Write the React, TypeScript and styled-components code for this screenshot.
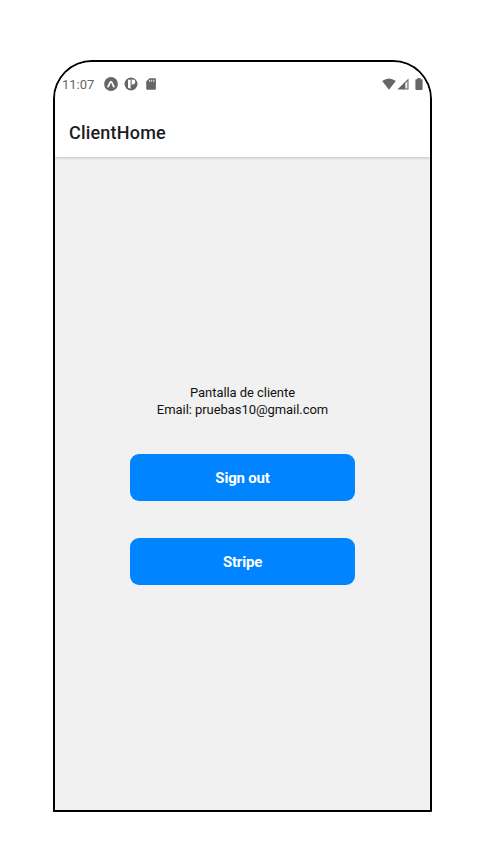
import React from "react";
import styled, { createGlobalStyle } from "styled-components";

const GlobalStyle = createGlobalStyle`
  * { box-sizing: border-box; }
  body { margin: 0; background: #fff; font-family: Roboto, sans-serif; }
`;

const Page = styled.div`
  height: 862px;
  padding: 60px 0 0 53px;
  background: #fff;
`;

const Phone = styled.main`
  display: flex;
  flex-direction: column;
  width: 379px;
  height: 752px;
  border: 2px solid #000;
  border-radius: 39px 39px 1px 0;
  overflow: hidden;
  background: #f1f1f1;
`;

const TopArea = styled.div`
  flex: none;
  background: #fff;
  box-shadow: 0 1px 3px rgba(0, 0, 0, 0.2);
`;

const StatusBar = styled.div`
  display: flex;
  align-items: center;
  height: 44px;
  padding: 0 7px;
  color: #666;
`;

const Time = styled.span`
  width: 42px;
  padding-top: 1px;
  font-size: 13px;
  line-height: 16px;
  white-space: nowrap;
`;

const Notifications = styled.div`
  display: flex;
  align-items: center;
  gap: 6px;
  flex: 1;
`;

const Signals = styled.div`
  display: flex;
  align-items: center;
`;

const Glyph = styled.svg<{ $gap?: number }>`
  display: block;
  margin-left: ${(p) => p.$gap ?? 0}px;
`;

const Header = styled.header`
  display: flex;
  align-items: center;
  height: 51px;
  padding: 3px 14px 0;
`;

const Title = styled.h1`
  margin: 0;
  font-size: 18px;
  font-weight: 500;
  line-height: 24px;
  letter-spacing: 0.2px;
  color: #1c1c1e;
`;

const Content = styled.section`
  display: flex;
  flex-direction: column;
  align-items: center;
  flex: 1;
  padding-top: 227px;
`;

const Info = styled.p`
  margin: 0 0 36px;
  font-size: 13px;
  line-height: 17px;
  letter-spacing: -0.06px;
  text-align: center;
  color: #111;
`;

const Line = styled.span`
  display: block;
`;

const Button = styled.button`
  width: 225px;
  height: 47px;
  margin: 0 0 36.6px;
  padding: 1px 0 0;
  border: 0;
  border-radius: 9px;
  background: #0084ff;
  color: #fff;
  font: 700 15px/20px Roboto, sans-serif;
  letter-spacing: -0.2px;
`;

export default function App() {
  return (
    <Page>
      <GlobalStyle />
      <Phone>
        <TopArea>
          <StatusBar>
            <Time>11:07</Time>
            <Notifications>
              <Glyph width="14" height="14" viewBox="0 0 14 14">
                <circle cx="7" cy="7" r="6.9" fill="#666" />
                <path d="M4.1 9.6C5.2 8.2 5.8 4.6 7 4.6s1.8 3.6 2.9 5" fill="none" stroke="#fff" strokeWidth="1.8" strokeLinecap="round" />
              </Glyph>
              <Glyph width="14" height="14" viewBox="0 0 14 14">
                <circle cx="7" cy="7" r="6.5" fill="#666" />
                <path d="M4 2.7h2.6v9.1L4 10.8Z" fill="#fff" />
                <path d="M7.6 2.6h1.3a2.4 2.4 0 0 1 0 4.8H7.6Z" fill="#fff" />
              </Glyph>
              <Glyph width="14" height="14" viewBox="0 0 14 14">
                <path d="M5.3 1.3h5.6a1 1 0 0 1 1 1v9.4a1 1 0 0 1-1 1H3.2a1 1 0 0 1-1-1V4.4Z" fill="#666" />
                <path d="M5.6 2.8v2M7.7 2.8v2M9.8 2.8v2" stroke="#fff" strokeWidth="0.9" />
              </Glyph>
            </Notifications>
            <Signals>
              <Glyph width="14" height="14" viewBox="0 0 14 14">
                <path d="M.2 4Q7-1.2 13.8 4L7 12.7Z" fill="#666" />
              </Glyph>
              <Glyph $gap={1} width="12" height="14" viewBox="0 0 12 14">
                <path d="M11.5 1.5v11H.4Z" fill="#666" />
                <path d="M8.2 6.2l2.3-2.3v7.6H8.2Z" fill="#fff" opacity=".85" />
              </Glyph>
              <Glyph $gap={6} width="8" height="14" viewBox="0 0 8 14">
                <path d="M2.4 1h3.2v1.2h1.1q.9 0 .9.9v9q0 .9-.9.9H1.3q-.9 0-.9-.9v-9q0-.9.9-.9h1.1Z" fill="#666" />
              </Glyph>
            </Signals>
          </StatusBar>
          <Header>
            <Title>ClientHome</Title>
          </Header>
        </TopArea>
        <Content>
          <Info>
            <Line>Pantalla de cliente</Line>
            <Line>Email: pruebas10@gmail.com</Line>
          </Info>
          <Button>Sign out</Button>
          <Button>Stripe</Button>
        </Content>
      </Phone>
    </Page>
  );
}
